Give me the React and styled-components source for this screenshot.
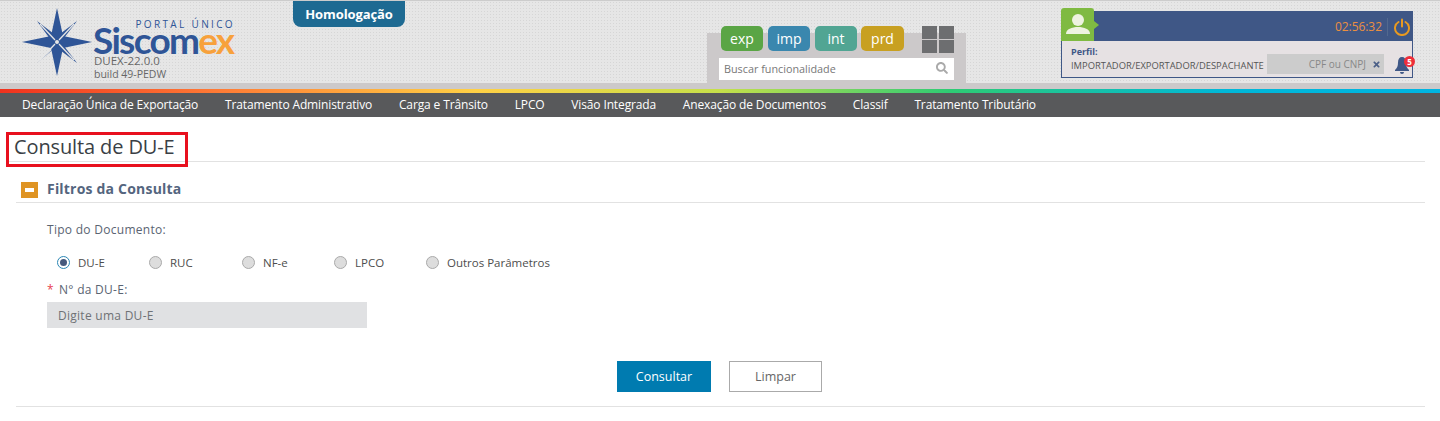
import React from 'react'
import styled, { createGlobalStyle } from 'styled-components'
import { FaSearch, FaTimes } from 'react-icons/fa'

const GlobalStyle = createGlobalStyle`
  html, body {
    margin: 0;
    padding: 0;
    background: #fff;
    font-family: 'Open Sans', sans-serif;
  }
  * { box-sizing: border-box; }
`

const Page = styled.div`
  width: 1440px;
  height: 421px;
  overflow: hidden;
`

const Header = styled.header`
  height: 83px;
  border-top: 1px solid #ccc;
  display: flex;
  align-items: flex-start;
  background-color: #e6e6e6;
  background-image: radial-gradient(#d6d6d6 1px, transparent 1px);
  background-size: 3px 3px;
`

const Logo = styled.div`
  width: 293px;
  height: 82px;
  padding: 7px 0 0 22px;
  display: flex;
`

const LogoText = styled.div`
  margin-left: 1px;
  display: flex;
  flex-direction: column;
`

const PortalLabel = styled.div`
  font-size: 10px;
  line-height: 9px;
  margin-top: 12px;
  letter-spacing: 2.35px;
  text-align: right;
  width: 142px;
  color: #2f5597;
  font-family: 'Open Sans', sans-serif;
`

const Brand = styled.div`
  font-family: 'Lato', sans-serif;
  font-weight: 700;
  font-size: 37px;
  line-height: 25px;
  letter-spacing: -1.75px;
  color: #2f5597;
  margin-top: -2px;
  span { color: #f7a13c; }
`

const Build = styled.div`
  font-size: 11.5px;
  line-height: 14px;
  color: #666;
  margin: 2px 0 0 1px;
  & + & { font-size: 10.5px; line-height: 13px; margin-top: 0; }
`

const EnvTab = styled.div`
  width: 112px;
  height: 26px;
  margin-right: 302px;
  background: #1e6a92;
  border-radius: 0 0 8px 8px;
  color: #fff;
  font-weight: 700;
  font-size: 13px;
  letter-spacing: -0.1px;
  line-height: 26px;
  text-align: center;
`

const SearchPanel = styled.div`
  width: 259px;
  height: 57px;
  margin-top: 25px;
  margin-right: 95px;
  padding: 0 12px;
  background: linear-gradient(#0000 7px, #ccc9ca 7px);
`

const ModuleRow = styled.div`
  display: flex;
  align-items: flex-start;
  height: 32px;
  padding-left: 2px;
`

const ModuleButton = styled.div`
  width: ${p => p.$w}px;
  height: 25px;
  margin-right: ${p => p.$gap}px;
  border-radius: 5px;
  background: ${p => p.$color};
  color: #fff;
  font-size: 14px;
  line-height: 25px;
  text-align: center;
`

const GridIcon = styled.div`
  width: 32px;
  height: 27px;
  margin-left: 18px;
  display: grid;
  grid-template-columns: 15px 15px;
  grid-template-rows: 13px 13px;
  gap: 1px 2px;
  i { background: #6d6e70; }
`

const SearchBox = styled.div`
  width: 235px;
  height: 22px;
  background: #fff;
  padding: 0 6px 2px 5px;
  display: flex;
  align-items: center;
  justify-content: space-between;
  font-size: 10.8px;
  color: #777;
  svg { color: #aaa; font-size: 12px; }
`

const UserPanel = styled.div`
  position: relative;
  width: 352px;
  height: 67px;
  margin-top: 10px;
  border: 1px solid #3f5786;
  background: #e6e1e3;
`

const UserBar = styled.div`
  height: 29px;
  background: #3f5786;
  display: flex;
  align-items: center;
  justify-content: flex-end;
  padding-right: 1px;
`

const Clock = styled.div`
  font-size: 12px;
  letter-spacing: -0.05px;
  color: #ec8f3f;
  padding-right: 5px;
  border-right: 1px solid #52698f;
  line-height: 18px;
`

const PowerIcon = styled.svg`
  width: 18px;
  height: 18px;
  margin-left: 5px;
`

const Avatar = styled.div`
  position: absolute;
  left: -1px;
  top: -4px;
  width: 33px;
  height: 33px;
  background: #7fba42;
  border-radius: 3px 3px 0 0;
  svg { display: block; }
  &::after {
    content: '';
    position: absolute;
    right: -5px;
    top: 13px;
    border-left: 5px solid #7fba42;
    border-top: 4px solid transparent;
    border-bottom: 4px solid transparent;
  }
`

const UserBody = styled.div`
  display: flex;
  padding-left: 9px;
  height: 36px;
`

const Profile = styled.div`
  width: 196px;
  font-size: 9.4px;
  color: #555;
  padding-top: 4px;
  line-height: 13px;
  white-space: nowrap;
  b { display: block; color: #3f5786; font-weight: 700; margin-bottom: 1px; font-size: 9px; }
`

const CpfBox = styled.div`
  width: 117px;
  height: 20px;
  margin-top: 13px;
  background: #ccc;
  color: #888;
  font-size: 10px;
  display: flex;
  align-items: center;
  justify-content: flex-end;
  padding-right: 3px;
  gap: 6px;
  svg { color: #4b5f87; font-size: 9px; }
`

const Bell = styled.div`
  position: relative;
  margin: 15px 0 0 11px;
  width: 14px;
  height: 19px;
  svg { display: block; }
`

const BellBadge = styled.span`
  position: absolute;
  top: 0;
  right: -6px;
  width: 11px;
  height: 11px;
  border-radius: 50%;
  background: #ee2e3a;
  color: #fff;
  font-size: 8px;
  font-weight: 700;
  line-height: 11px;
  text-align: center;
`

const GrayBand = styled.div`
  height: 6px;
  background: #ccc9ca;
`

const Rainbow = styled.div`
  height: 4px;
  background: linear-gradient(90deg, #f0321e 0%, #ff7a35 15%, #ffd045 33%, #c6e04a 50%, #2ecb74 66%, #00b8d8 85%, #00b5e2 100%);
`

const Nav = styled.nav`
  height: 24px;
  background: #58595b;
  padding-left: 22px;
  display: flex;
  gap: 26.75px;
`

const NavItem = styled.a`
  color: #fff;
  font-size: 12px;
  letter-spacing: -0.13px;
  line-height: 24px;
  white-space: nowrap;
`

const Content = styled.main`
  padding: 0 15px 0 16px;
`

const TitleRow = styled.div`
  position: relative;
  height: 45px;
  margin-left: -10px;
  padding: 16px 0 0 8px;
  border-bottom: 1px solid #e2e2e2;
`

const Title = styled.h1`
  margin: 0;
  font-size: 20px;
  font-weight: 400;
  letter-spacing: -0.12px;
  line-height: 27px;
  color: #3a3f45;
`

const RedMark = styled.div`
  position: absolute;
  left: 0;
  top: 15px;
  width: 182px;
  height: 35px;
  border: 3px solid #e8101e;
`

const SectionHead = styled.div`
  height: 41px;
  padding: 16px 0 0 5px;
  border-bottom: 1px solid #e2e2e2;
  display: flex;
  align-items: center;
  gap: 9px;
`

const Toggle = styled.div`
  width: 17px;
  height: 16px;
  background: #df9423;
  display: flex;
  align-items: center;
  justify-content: center;
  &::before {
    content: '';
    width: 9px;
    height: 4px;
    background: #fff;
  }
`

const SectionTitle = styled.h2`
  margin: -3px 0 0;
  font-size: 14px;
  letter-spacing: 0.2px;
  font-weight: 700;
  color: #54657e;
`

const Form = styled.div`
  padding: 18px 0 0 31px;
  color: #555;
`

const Label = styled.div`
  font-size: 12px;
  letter-spacing: 0.28px;
  line-height: 17px;
  color: #5a6472;
`

const RadioRow = styled.div`
  display: flex;
  margin-top: 16px;
  padding-left: 10px;
  height: 17px;
  align-items: center;
`

const RadioItem = styled.label`
  display: flex;
  align-items: center;
  width: ${p => p.$w}px;
  font-size: 11.5px;
  color: #4d4d4d;
  gap: 8px;
`

const RadioDot = styled.span`
  width: 13px;
  height: 13px;
  border-radius: 50%;
  border: 1px solid ${p => (p.$on ? '#2b87b5' : '#aaa')};
  background: ${p => (p.$on ? '#fff' : '#ddd')};
  display: flex;
  align-items: center;
  justify-content: center;
  &::before {
    content: '';
    display: ${p => (p.$on ? 'block' : 'none')};
    width: 7px;
    height: 7px;
    border-radius: 50%;
    background: #45597c;
  }
`

const FieldLabel = styled(Label)`
  position: relative;
  margin-top: 10px;
  padding-left: 12px;
  span { color: #e8424f; position: absolute; left: 0; top: 0; }
`

const TextInput = styled.div`
  width: 320px;
  height: 26px;
  margin-top: 4px;
  background: #e0e1e3;
  color: #6f7275;
  font-size: 12px;
  letter-spacing: 0.27px;
  line-height: 27px;
  padding-left: 11px;
`

const Actions = styled.div`
  display: flex;
  justify-content: center;
  gap: 18px;
  padding: 33px 2px 14px 0;
  border-bottom: 1px solid #e2e2e2;
`

const Button = styled.button`
  width: ${p => p.$w}px;
  height: 31px;
  font-family: inherit;
  font-size: 12.5px;
  border-radius: 0;
  border: ${p => (p.$primary ? '0' : '1px solid #aaa')};
  background: ${p => (p.$primary ? '#007bb0' : '#fff')};
  color: ${p => (p.$primary ? '#fff' : '#666')};
`

const Star = () => (
  <svg width="70" height="68" viewBox="0 0 70 68">
    <polygon
      fill="#2f5597"
      points="35,0 41,28 70,34 41,40 35,68 29,40 0,34 29,28"
    />
    <g fill="#2f5597">
      <polygon points="15,13 36,29 31,35" />
      <polygon points="55,13 39,34 34,29" />
      <polygon points="15,55 34,39 39,34" />
      <polygon points="55,55 34,39 39,34" />
    </g>
    <g stroke="#e6e6e6" strokeWidth="1.2">
      <path d="M18 16L33 32" />
      <path d="M52 16L37 32" />
      <path d="M18 52L33 36" />
      <path d="M52 52L37 36" />
    </g>
    <circle cx="35" cy="34" r="2" fill="#e6e6e6" />
  </svg>
)

const navItems = [
  'Declaração Única de Exportação',
  'Tratamento Administrativo',
  'Carga e Trânsito',
  'LPCO',
  'Visão Integrada',
  'Anexação de Documentos',
  'Classif',
  'Tratamento Tributário',
]

const modules = [
  { name: 'exp', color: '#5aa545', w: 42, gap: 5 },
  { name: 'imp', color: '#3a87ae', w: 42, gap: 5 },
  { name: 'int', color: '#51a593', w: 42, gap: 4 },
  { name: 'prd', color: '#c8a021', w: 43, gap: 0 },
]

const radios = [
  { name: 'DU-E', w: 92, on: true },
  { name: 'RUC', w: 93 },
  { name: 'NF-e', w: 92 },
  { name: 'LPCO', w: 92 },
  { name: 'Outros Parâmetros', w: 140 },
]

const App = () => (
  <Page>
    <GlobalStyle />
    <Header>
      <Logo>
        <Star />
        <LogoText>
          <PortalLabel>PORTAL ÚNICO</PortalLabel>
          <Brand>
            Siscom<span>ex</span>
          </Brand>
          <Build>DUEX-22.0.0</Build>
          <Build>build 49-PEDW</Build>
        </LogoText>
      </Logo>
      <EnvTab>Homologação</EnvTab>
      <SearchPanel>
        <ModuleRow>
          {modules.map(m => (
            <ModuleButton key={m.name} $color={m.color} $w={m.w} $gap={m.gap}>
              {m.name}
            </ModuleButton>
          ))}
          <GridIcon>
            <i />
            <i />
            <i />
            <i />
          </GridIcon>
        </ModuleRow>
        <SearchBox>
          Buscar funcionalidade
          <FaSearch />
        </SearchBox>
      </SearchPanel>
      <UserPanel>
        <Avatar>
          <svg width="33" height="33" viewBox="0 0 33 33">
            <circle cx="17" cy="12" r="6" fill="#eef3e0" />
            <path d="M5 26c0-5 6-7 12-7s12 2 12 7z" fill="#eef3e0" />
          </svg>
        </Avatar>
        <UserBar>
          <Clock>02:56:32</Clock>
          <PowerIcon viewBox="0 0 18 18" fill="none" stroke="#e99a1f" strokeWidth="2" strokeLinecap="round">
            <path d="M5.5 4a7 7 0 1 0 7 0" />
            <path d="M9 1.5v7" />
          </PowerIcon>
        </UserBar>
        <UserBody>
          <Profile>
            <b>Perfil:</b>
            IMPORTADOR/EXPORTADOR/DESPACHANTE
          </Profile>
          <CpfBox>
            CPF ou CNPJ
            <FaTimes />
          </CpfBox>
          <Bell>
            <svg width="14" height="19" viewBox="0 0 14 19" fill="#3f5786">
              <path d="M7 1C4.500 1 3 3 3 6.500c0 4-1 5.500-3 7.500v1h14v-1c-2-2-3-3.500-3-7.500C11 3 9.500 1 7 1z" />
              <path d="M5 16a2 2 0 0 0 4 0z" />
            </svg>
            <BellBadge>5</BellBadge>
          </Bell>
        </UserBody>
      </UserPanel>
    </Header>
    <GrayBand />
    <Rainbow />
    <Nav>
      {navItems.map(item => (
        <NavItem key={item}>{item}</NavItem>
      ))}
    </Nav>
    <Content>
      <TitleRow>
        <Title>Consulta de DU-E</Title>
        <RedMark />
      </TitleRow>
      <SectionHead>
        <Toggle />
        <SectionTitle>Filtros da Consulta</SectionTitle>
      </SectionHead>
      <Form>
        <Label>Tipo do Documento:</Label>
        <RadioRow>
          {radios.map(r => (
            <RadioItem key={r.name} $w={r.w}>
              <RadioDot $on={r.on} />
              {r.name}
            </RadioItem>
          ))}
        </RadioRow>
        <FieldLabel>
          <span>*</span>N° da DU-E:
        </FieldLabel>
        <TextInput>Digite uma DU-E</TextInput>
      </Form>
      <Actions>
        <Button $primary $w={94}>
          Consultar
        </Button>
        <Button $w={93}>Limpar</Button>
      </Actions>
    </Content>
  </Page>
)

export default App
